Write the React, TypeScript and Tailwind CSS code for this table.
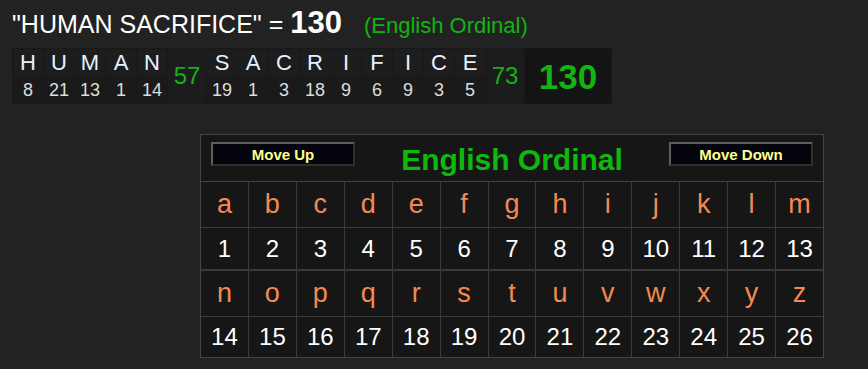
import React from 'react'

const phrase = [
    { word: 'HUMAN', letters: ['H', 'U', 'M', 'A', 'N'], values: [8, 21, 13, 1, 14], sum: 57 },
    { word: 'SACRIFICE', letters: ['S', 'A', 'C', 'R', 'I', 'F', 'I', 'C', 'E'], values: [19, 1, 3, 18, 9, 6, 9, 3, 5], sum: 73 },
]

const alphabet = 'abcdefghijklmnopqrstuvwxyz'.split('')

function LetterColumn({ letter, value }: { letter: string; value: number }) {
    return (
        <div className="flex flex-col gap-px">
            <div className="w-[30px] h-[27px] bg-[#1d1d1d] flex items-center justify-center text-[22px] leading-none text-[#e6f2ff]">{letter}</div>
            <div className="w-[30px] h-[26px] bg-[#1a1a1a] flex items-center justify-center text-[18px] leading-none text-[#dddddd]">{value}</div>
        </div>
    )
}

function MoveButton({ label }: { label: string }) {
    return (
        <button className="w-[144px] h-[24px] bg-[#04040c] border-2 border-t-[#5e5e5e] border-l-[#5e5e5e] border-b-[#2e2e2e] border-r-[#2e2e2e] text-[15px] font-bold text-[#ffff8c] leading-none">
            {label}
        </button>
    )
}

export default function App() {
    const rows = [alphabet.slice(0, 13), alphabet.slice(13)]

    return (
        <div className="w-[868px] h-[369px] bg-[#222222] overflow-hidden font-['Liberation_Sans',Arial,sans-serif]">
            <div className="pl-3 h-[48px] flex items-baseline whitespace-pre">
                <span className="text-[25px] text-white">"HUMAN SACRIFICE" = </span>
                <span className="text-[31px] font-bold text-white">130</span>
                <span className="ml-[22px] text-[22px] text-[#11b511]">(English Ordinal)</span>
            </div>

            <div className="ml-3 inline-flex gap-px p-px bg-[#181818]">
                {phrase.map((w) => (
                    <React.Fragment key={w.word}>
                        {w.letters.map((l, i) => (
                            <LetterColumn key={i} letter={l} value={w.values[i]} />
                        ))}
                        <div className="w-[38px] bg-[#1c1c1c] flex items-center justify-center text-[24px] text-[#13b313] leading-none">
                            {w.sum}
                        </div>
                    </React.Fragment>
                ))}
                <div className="w-[86px] bg-[#141414] flex items-center justify-center text-[35px] font-bold text-[#11b511] leading-none">
                    130
                </div>
            </div>

            <div className="ml-[200px] mt-[30px] w-[624px] border border-[#444444] bg-[#161616]">
                <div className="h-[47px] flex items-start justify-between px-[10px] pt-[7px] border-b border-[#444444]">
                    <MoveButton label="Move Up" />
                    <div className="mt-[3px] text-[30px] font-bold text-[#0fb80f] leading-none">English Ordinal</div>
                    <MoveButton label="Move Down" />
                </div>
                <div className="grid grid-cols-13 gap-px bg-[#3a3a3a]">
                    {rows.map((row, r) => (
                        <React.Fragment key={r}>
                            {row.map((ch) => (
                                <div key={ch} className="h-[45px] bg-[#161616] flex items-center justify-center text-[27px] leading-none text-[#f28a52]">
                                    {ch}
                                </div>
                            ))}
                            {row.map((ch, i) => (
                                <div key={ch + 'n'} className={`bg-[#161616] flex items-center justify-center text-[24px] leading-none text-white ${r === 0 ? 'h-[42px] border-b border-[#3a3a3a]' : 'h-[40px]'}`}>
                                    {r * 13 + i + 1}
                                </div>
                            ))}
                        </React.Fragment>
                    ))}
                </div>
            </div>
        </div>
    )
}
